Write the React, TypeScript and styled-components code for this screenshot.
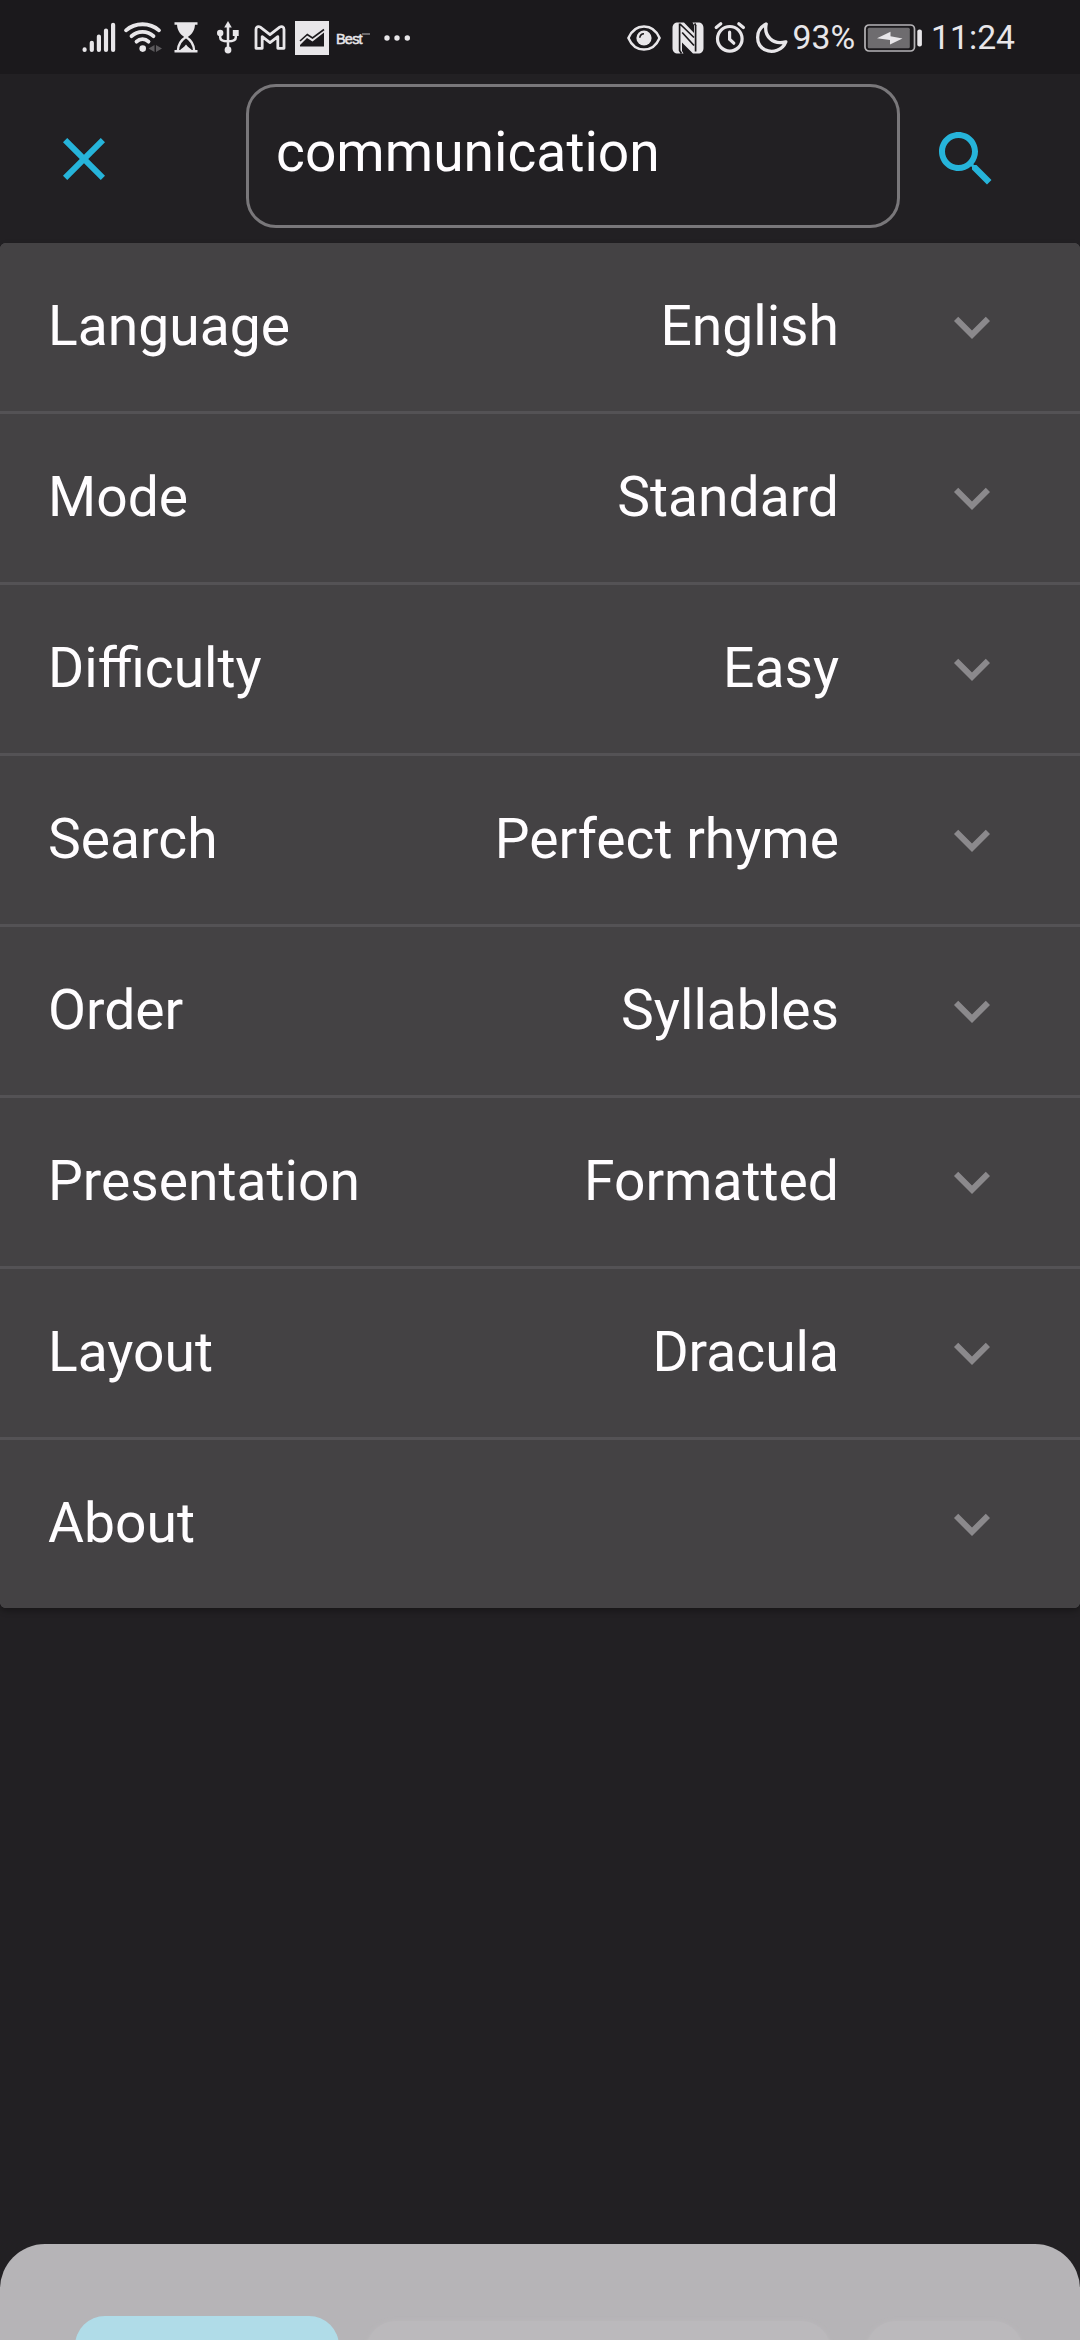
import React from "react";
import styled, { createGlobalStyle } from "styled-components";

const GlobalStyle = createGlobalStyle`
  * { box-sizing: border-box; }
  body { margin: 0; background: #222023; }
`;

const colors = {
  status: "#1b191c",
  page: "#222023",
  panel: "#444244",
  text: "#fffdff",
  statusInk: "#e8e6e9",
  accent: "#26b4da",
  chevron: "#8b898c",
};

const Screen = styled.div`
  display: flex;
  flex-direction: column;
  width: 1080px;
  height: 2340px;
  overflow: hidden;
  background: ${colors.page};
  color: ${colors.text};
  font-family: Roboto, "Noto Sans", sans-serif;
`;

const StatusBar = styled.header`
  display: flex;
  justify-content: space-between;
  height: 74px;
  flex: none;
  padding: 0 65px 0 82px;
  background: ${colors.status};
  color: ${colors.statusInk};
`;

const StatusGroup = styled.div`
  display: flex;
  align-items: center;
  height: 75px;
`;

const StatusIcon = styled.svg<{ $gap?: number }>`
  display: block;
  flex: none;
  margin-left: ${(p) => p.$gap ?? 0}px;
  overflow: visible;
`;

const StatusText = styled.span<{ $gap: number }>`
  margin-left: ${(p) => p.$gap}px;
  font-size: 33.7px;
  line-height: 40px;
  padding-top: 1px;
  white-space: nowrap;
`;

const BrandText = styled.span`
  display: flex;
  align-items: flex-start;
  width: 35px;
  margin-left: 7px;
  padding-top: 3px;
  font-family: "Liberation Sans", Arial, sans-serif;
  font-size: 14.5px;
  line-height: 14px;
  letter-spacing: -0.8px;
  -webkit-text-stroke: 0.5px currentColor;
`;

const BrandMark = styled.i`
  flex: none;
  width: 8px;
  height: 2px;
  margin-top: 1px;
  background: #6b696c;
`;

const SearchBar = styled.div`
  display: flex;
  flex: none;
  align-items: flex-start;
  height: 169px;
  padding: 10px 78px 0 48px;
`;

const IconButton = styled.button`
  display: block;
  flex: none;
  width: 72px;
  height: 72px;
  margin-top: 39px;
  padding: 0;
  border: 0;
  background: none;
  color: ${colors.accent};
`;

const SearchField = styled.div`
  display: flex;
  flex: none;
  width: 654px;
  height: 144px;
  margin: 0 30px 0 126px;
  padding: 32px 26px 0 27px;
  border: 3px solid #79777a;
  border-radius: 30px;
  font-size: 55.2px;
  line-height: 66px;
`;

const OptionList = styled.div`
  display: flex;
  flex: none;
  flex-direction: column;
  gap: 3px;
  border-radius: 6px;
  overflow: hidden;
  background: #545255;
  box-shadow: 0 3px 6px rgba(0, 0, 0, 0.3);
`;

const OptionRow = styled.div`
  display: flex;
  align-items: center;
  height: 168px;
  padding: 0 72px 0 48px;
  background: ${colors.panel};
  font-size: 55.2px;
  line-height: 66px;
`;

const OptionLabel = styled.span`
  flex: 1;
  padding-bottom: 2px;
`;

const OptionValue = styled.span`
  margin-right: 97px;
  padding-bottom: 2px;
`;

const Chevron = styled.svg`
  display: block;
  flex: none;
  fill: ${colors.chevron};
`;

const BottomSheet = styled.div`
  display: flex;
  flex: none;
  gap: 27px;
  height: 96px;
  margin-top: auto;
  padding: 72px 51px 0 75px;
  border-radius: 45px 45px 0 0;
  background: #b6b4b7;
  overflow: hidden;
`;

const Chip = styled.div<{ $width: number; $active?: boolean }>`
  flex: none;
  width: ${(p) => p.$width}px;
  height: 90px;
  margin-top: ${(p) => (p.$active ? 0 : 5)}px;
  margin-right: ${(p) => (p.$active ? 0 : 8)}px;
  border-radius: 30px;
  background: ${(p) => (p.$active ? "#b0dce8" : "#bbb9bc")};
  box-shadow: ${(p) => (p.$active ? "none" : "0 0 4px #bbb9bc")};
`;

const options = [
  { label: "Language", value: "English" },
  { label: "Mode", value: "Standard" },
  { label: "Difficulty", value: "Easy" },
  { label: "Search", value: "Perfect rhyme" },
  { label: "Order", value: "Syllables" },
  { label: "Presentation", value: "Formatted" },
  { label: "Layout", value: "Dracula" },
  { label: "About", value: "" },
];

function NotificationIcons() {
  return (
    <StatusGroup>
      <StatusIcon width="34" height="31" viewBox="0 0 34 31" stroke="currentColor" strokeWidth="4.2" strokeLinecap="round">
        <path d="M2.6 27.4V28M9.8 20.8V28M16.9 14.5V28M24 8.5V28M31.1 2.8V28" />
      </StatusIcon>
      <StatusIcon $gap={8} width="37" height="31" viewBox="0 0 37 31" fill="none" stroke="currentColor" strokeWidth="3.8" strokeLinecap="round">
        <path d="M2 8.3C11 0.2 26 0.2 35 8.3M7.5 14.2C13.5 8.3 23.5 8.3 29.5 14.2M12.5 19.7C16 16.2 21 16.2 24.5 19.7" />
        <circle cx="18.7" cy="26.6" r="3.3" fill="currentColor" stroke="none" />
        <path d="M30.5 23v7l-6-3.5zM32 23v7l6-3.5z" fill="#5c5a5d" stroke="none" />
      </StatusIcon>
      <StatusIcon $gap={13} width="24" height="31" viewBox="0 0 24 31" fill="none" stroke="currentColor" strokeWidth="2.4">
        <path d="M0.5 1.5H23.5M0.5 29.3H23.5" />
        <path d="M3 1.5H21C21 8 18.5 12 13.2 15.4H10.8C5.5 12 3 8 3 1.5Z" fill="currentColor" stroke="none" />
        <path d="M3.8 29C4 22 6.5 18.3 12 15C17.5 18.3 20 22 20.2 29" />
        <path d="M5.5 29C7 26.5 10 25.5 12 22.5C14 25.5 17 26.5 18.5 29Z" fill="currentColor" stroke="none" />
      </StatusIcon>
      <StatusIcon $gap={19} width="22" height="33" viewBox="0 0 22 33" fill="none" stroke="currentColor" strokeWidth="2.5">
        <path d="M11 5V29M3.2 13V16.5C3.2 19.5 6 20.3 11 20.3C16 20.3 18.8 19.5 18.8 16.5V13" />
        <path d="M11 0L14.8 6.5H7.2Z" fill="currentColor" stroke="none" />
        <circle cx="3.2" cy="12" r="3.2" fill="currentColor" stroke="none" />
        <path d="M15.8 9H21.7V15H15.8Z" fill="currentColor" stroke="none" />
        <circle cx="11" cy="29" r="3.4" fill="currentColor" stroke="none" />
      </StatusIcon>
      <StatusIcon $gap={15} width="32" height="25" viewBox="0 0 32 25" fill="none" stroke="currentColor" strokeWidth="2.8" strokeLinejoin="round">
        <path d="M2 23.3V4.4C2 1.8 4.4 0.9 6.3 2.2L16 9.7L25.7 2.2C27.6 0.9 30 1.8 30 4.4V23.3H23.8V11.7L16 17.6L8.2 11.7V23.3Z" />
      </StatusIcon>
      <StatusIcon $gap={9} width="34" height="34" viewBox="0 0 34 34" fill="none">
        <path d="M0 0H34V34H0Z" fill="currentColor" />
        <path d="M5 25.5V24L12 17L17.5 20.5L29 11.5V25.5Z" fill={colors.status} />
        <path d="M5 20L12.3 13.5L17.5 17L29 8.5" stroke={colors.status} strokeWidth="1.6" />
      </StatusIcon>
      <BrandText>
        Best
        <BrandMark />
      </BrandText>
      <StatusIcon $gap={13} width="27" height="6" viewBox="0 0 27 6" fill="currentColor">
        <circle cx="3" cy="3" r="2.7" />
        <circle cx="13" cy="3" r="2.7" />
        <circle cx="23.3" cy="3" r="2.7" />
      </StatusIcon>
    </StatusGroup>
  );
}

function SystemIcons() {
  return (
    <StatusGroup>
      <StatusIcon width="34" height="26" viewBox="0 0 34 26" fill="none" stroke="currentColor" strokeWidth="2.5">
        <path d="M1.4 13C8 -2.4 26 -2.4 32.6 13C26 28.4 8 28.4 1.4 13Z" strokeLinejoin="round" />
        <circle cx="17" cy="13" r="7.6" fill="currentColor" stroke="none" />
        <path d="M12.8 12.8C13 10.2 14.5 8.8 17 8.7" stroke={colors.status} strokeWidth="1.6" />
      </StatusIcon>
      <StatusIcon $gap={11} width="32" height="32" viewBox="0 0 32 32" fill="currentColor">
        <path d="M6 0.5H7V28L9.5 31.5H6C2.5 31.5 0.5 29.5 0.5 26V6C0.5 2.5 2.5 0.5 6 0.5Z" />
        <path d="M26 0.5H22.5L25 4V31.5H26C29.5 31.5 31.5 29.5 31.5 26V6C31.5 2.5 29.5 0.5 26 0.5Z" />
        <path d="M9 0.5H12L22 11V3L20.5 0.5H22.5L25 4V31.5H21L10 20.5V29L11.5 31.5H9.5L7 28V0.5Z" />
        <path
          d="M7.6 1.5V28.5L9.5 31.5M8 2L22 15.5M10.2 10.5L22 23.5M22.6 1.5L23.6 3.5V29.5"
          fill="none"
          stroke={colors.status}
          strokeWidth="1.7"
        />
      </StatusIcon>
      <StatusIcon $gap={10} width="32" height="31" viewBox="0 0 32 31" fill="none" stroke="currentColor" strokeWidth="3.2" strokeLinecap="round">
        <circle cx="15.8" cy="16.8" r="12.3" />
        <path d="M2.2 5.6L6.8 1.8M29.4 5.6L24.8 1.8" />
        <path d="M15.6 10.2V17.2L19.8 21.2" />
      </StatusIcon>
      <StatusIcon $gap={10} width="32" height="31" viewBox="0 0 32 31" fill="none" stroke="currentColor" strokeWidth="3.3" strokeLinejoin="round">
        <path d="M10.2 2C-1.5 8 -0.5 23 9 27.8C17 31.5 26.5 28 29.8 19.8C17 23.5 7.5 14 10.2 2Z" />
      </StatusIcon>
      <StatusText $gap={5}>93%</StatusText>
      <StatusIcon $gap={9} width="59" height="28" viewBox="0 0 59 28" fill="none">
        <rect x="1" y="1" width="49.5" height="26" rx="4" stroke="#b5b3b6" strokeWidth="1.7" />
        <rect x="3.8" y="3.8" width="42" height="20.4" rx="1.5" fill="#6e6c6f" />
        <path d="M13 14.3L26.5 7.8V12.3L38.5 14.5L26 20.5V16Z" fill="currentColor" />
        <rect x="53.3" y="5.5" width="4.6" height="17" rx="2" fill="currentColor" />
      </StatusIcon>
      <StatusText $gap={8}>11:24</StatusText>
    </StatusGroup>
  );
}

export default function App() {
  return (
    <Screen>
      <GlobalStyle />
      <StatusBar>
        <NotificationIcons />
        <SystemIcons />
      </StatusBar>
      <SearchBar>
        <IconButton aria-label="Close">
          <svg width="72" height="72" viewBox="0 0 24 24" fill="currentColor" display="block">
            <path d="M19 6.41 17.59 5 12 10.59 6.41 5 5 6.41 10.59 12 5 17.59 6.41 19 12 13.41 17.59 19 19 17.59 13.41 12z" />
          </svg>
        </IconButton>
        <SearchField>communication</SearchField>
        <IconButton aria-label="Search">
          <svg width="72" height="72" viewBox="0 0 24 24" fill="currentColor" display="block">
            <path d="M15.5 14h-.79l-.28-.27C15.41 12.59 16 11.11 16 9.5 16 5.91 13.09 3 9.5 3S3 5.91 3 9.5 5.91 16 9.5 16c1.61 0 3.09-.59 4.23-1.57l.27.28v.79l5 4.99L20.49 19l-4.99-5zm-6 0C7.01 14 5 11.99 5 9.5S7.01 5 9.5 5 14 7.01 14 9.5 11.99 14 9.5 14z" />
          </svg>
        </IconButton>
      </SearchBar>
      <OptionList>
        {options.map((option) => (
          <OptionRow key={option.label}>
            <OptionLabel>{option.label}</OptionLabel>
            <OptionValue>{option.value}</OptionValue>
            <Chevron width="72" height="72" viewBox="0 0 24 24">
              <path d="M7.41 8.59 12 13.17l4.59-4.58L18 10l-6 6-6-6z" />
            </Chevron>
          </OptionRow>
        ))}
      </OptionList>
      <BottomSheet>
        <Chip $width={264} $active />
        <Chip $width={465} />
        <Chip $width={157} />
      </BottomSheet>
    </Screen>
  );
}
